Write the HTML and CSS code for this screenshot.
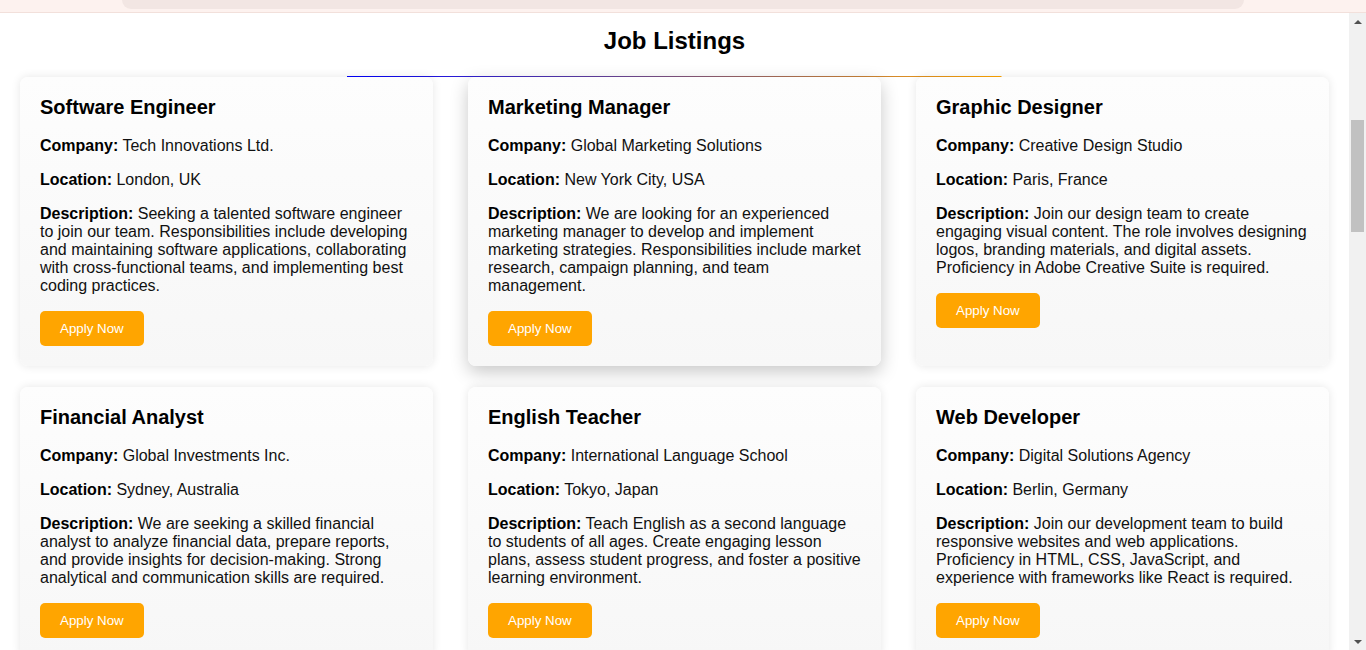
FILE: index.html
```html
<!DOCTYPE html>
<html lang="en">
<head>
<meta charset="utf-8">
<title>Job Listings</title>
<link rel="stylesheet" href="styles.css">
</head>
<body>
<div class="browser-bar"><div class="omnibox"></div></div>
<div class="window">
  <main class="page">
    <section class="jobs">
      <header class="jobs-head">
        <h2 class="jobs-title">Job Listings</h2>
        <svg class="title-rule" viewBox="0 0 100 1" preserveAspectRatio="none" aria-hidden="true">
          <defs>
            <linearGradient id="ruleGradient" x1="0" y1="0" x2="1" y2="0">
              <stop offset="0" stop-color="#0000ff"/>
              <stop offset="1" stop-color="#ffa500"/>
            </linearGradient>
          </defs>
          <rect x="0" y="0" width="100" height="1" fill="url(#ruleGradient)"/>
        </svg>
      </header>
      <div class="job-grid">
        <article class="card">
          <h3>Software Engineer</h3>
          <p><strong>Company:</strong> Tech Innovations Ltd.</p>
          <p><strong>Location:</strong> London, UK</p>
          <p><strong>Description:</strong> Seeking a talented software engineer to join our team. Responsibilities include developing and maintaining software applications, collaborating with cross-functional teams, and implementing best coding practices.</p>
          <button class="apply-btn">Apply Now</button>
        </article>
        <article class="card card--raised">
          <h3>Marketing Manager</h3>
          <p><strong>Company:</strong> Global Marketing Solutions</p>
          <p><strong>Location:</strong> New York City, USA</p>
          <p><strong>Description:</strong> We are looking for an experienced marketing manager to develop and implement marketing strategies. Responsibilities include market research, campaign planning, and team management.</p>
          <button class="apply-btn">Apply Now</button>
        </article>
        <article class="card">
          <h3>Graphic Designer</h3>
          <p><strong>Company:</strong> Creative Design Studio</p>
          <p><strong>Location:</strong> Paris, France</p>
          <p><strong>Description:</strong> Join our design team to create engaging visual content. The role involves designing logos, branding materials, and digital assets. Proficiency in Adobe Creative Suite is required.</p>
          <button class="apply-btn">Apply Now</button>
        </article>
        <article class="card">
          <h3>Financial Analyst</h3>
          <p><strong>Company:</strong> Global Investments Inc.</p>
          <p><strong>Location:</strong> Sydney, Australia</p>
          <p><strong>Description:</strong> We are seeking a skilled financial analyst to analyze financial data, prepare reports, and provide insights for decision-making. Strong analytical and communication skills are required.</p>
          <button class="apply-btn">Apply Now</button>
        </article>
        <article class="card">
          <h3>English Teacher</h3>
          <p><strong>Company:</strong> International Language School</p>
          <p><strong>Location:</strong> Tokyo, Japan</p>
          <p><strong>Description:</strong> Teach English as a second language to students of all ages. Create engaging lesson plans, assess student progress, and foster a positive learning environment.</p>
          <button class="apply-btn">Apply Now</button>
        </article>
        <article class="card">
          <h3>Web Developer</h3>
          <p><strong>Company:</strong> Digital Solutions Agency</p>
          <p><strong>Location:</strong> Berlin, Germany</p>
          <p><strong>Description:</strong> Join our development team to build responsive websites and web applications. Proficiency in HTML, CSS, JavaScript, and experience with frameworks like React is required.</p>
          <button class="apply-btn">Apply Now</button>
        </article>
      </div>
    </section>
  </main>
  <div class="scrollbar" aria-hidden="true">
    <div class="sb-arrow"><span class="tri tri--up"></span></div>
    <div class="sb-track"><div class="sb-thumb"></div></div>
    <div class="sb-arrow"><span class="tri tri--down"></span></div>
  </div>
</div>
</body>
</html>
```

FILE: styles.css
```css
* {
  box-sizing: border-box;
}

html, body {
  height: 100%;
}

body {
  margin: 0;
  font-family: "Liberation Sans", Arial, sans-serif;
  color: #111;
  background: #fff;
  display: flex;
  flex-direction: column;
  overflow: hidden;
}

/* browser chrome strip at the top */
.browser-bar {
  flex: 0 0 13px;
  background: #fdf2ef;
  border-bottom: 1px solid #f2e0db;
  padding: 0 122px;
}

.omnibox {
  height: 9px;
  background: #f2e6e3;
  border-radius: 0 0 12px 12px;
}

.window {
  flex: 1 1 auto;
  display: flex;
  min-height: 0;
}

.page {
  flex: 1 1 auto;
  overflow: hidden;
  background: #fff;
}

/* scrollbar */
.scrollbar {
  flex: 0 0 17px;
  display: flex;
  flex-direction: column;
  background: #f1f1f1;
}

.sb-arrow {
  flex: 0 0 17px;
  display: flex;
  align-items: center;
  justify-content: center;
}

.tri {
  width: 0;
  height: 0;
  border-left: 4px solid transparent;
  border-right: 4px solid transparent;
}

.tri--up {
  border-bottom: 4px solid #505050;
}

.tri--down {
  border-top: 4px solid #505050;
}

.sb-track {
  flex: 1 1 auto;
  padding: 90px 2px 0;
}

.sb-thumb {
  height: 112px;
  background: #c1c1c1;
}

/* job listings */
.jobs {
  padding: 14px 20px 20px;
}

.jobs-head {
  display: flex;
  flex-direction: column;
  align-items: center;
}

.jobs-title {
  margin: 0 0 21px;
  font-size: 24px;
  line-height: 28px;
  font-weight: bold;
  text-align: center;
  color: #000;
}

.title-rule {
  display: block;
  width: 50%;
  height: 1px;
}

.job-grid {
  display: grid;
  grid-template-columns: repeat(3, 1fr);
  column-gap: 35px;
  row-gap: 20.7px;
}

.card {
  display: flex;
  flex-direction: column;
  align-items: flex-start;
  padding: 19px 20px 20px;
  border-radius: 8px;
  background: linear-gradient(to bottom, #fdfdfd, #f7f7f7);
  box-shadow: 0 0 10px rgba(0, 0, 0, 0.1);
}

.card--raised {
  box-shadow: 0 6px 18px rgba(0, 0, 0, 0.22);
}

.card h3 {
  margin: 0 0 18px;
  font-size: 20px;
  line-height: 23px;
  font-weight: bold;
  color: #000;
}

.card p {
  margin: 0 0 16px;
  font-size: 16px;
  line-height: 18px;
  color: #111;
}

.card strong {
  color: #000;
}

.apply-btn {
  padding: 10px 20px;
  border: none;
  border-radius: 5px;
  background: #ffa500;
  color: #fff;
  font-family: "Liberation Sans", Arial, sans-serif;
  font-size: 13.333px;
  line-height: 15.3px;
  cursor: pointer;
}
```
